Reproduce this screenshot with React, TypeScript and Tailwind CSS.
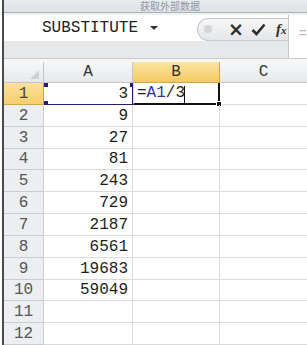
import React from 'react'

const mono = { fontFamily: '"Liberation Mono", "DejaVu Sans Mono", monospace' }

const values = ['3', '9', '27', '81', '243', '729', '2187', '6561', '19683', '59049', '', '']

function Corner({ className }: { className: string }) {
  return <div className={`absolute w-[4px] h-[4px] bg-[#1f1f7a] ${className}`} />
}

export default function App() {
  return (
    <div className="w-[307px] h-[345px] overflow-hidden bg-white pl-[2px]">
      <div className="h-full border-l-2 border-[#4a4a4a] flex flex-col">
        {/* Title bar */}
        <div className="h-[14px] bg-gradient-to-b from-[#e9ecef] to-[#dde1e6] flex items-center">
          <p
            className="pl-[136px] text-[10px] leading-[12px] text-[#8e98a4]"
            style={{ fontFamily: '"Noto Sans CJK SC", sans-serif' }}
          >
            获取外部数据
          </p>
        </div>
        <div className="h-px bg-[#a9b0b8]" />
        <div className="h-[2px] bg-[#eef0f2]" />

        {/* Name box + formula bar */}
        <div className="flex h-[48px]">
          <div className="w-[287px] flex flex-col">
            <div className="h-[26px] flex items-center bg-white">
              <div className="w-[193px] flex items-center">
                <span className="pl-[38px] text-[16px] leading-none text-[#222]" style={mono}>
                  SUBSTITUTE
                </span>
                <span className="ml-[12px] w-0 h-0 border-l-[4px] border-r-[4px] border-t-[4px] border-l-transparent border-r-transparent border-t-[#333]" />
              </div>
              <div className="flex-1 h-[23px] mt-[2px] flex items-center rounded-l-full border border-r-0 border-[#c6c9cd] bg-gradient-to-b from-[#f7f7f7] to-[#e4e6e9]">
                <span className="ml-[6px] w-[8px] h-[8px] rounded-full bg-[#d3d5d8]" />
                <span className="ml-[16px] text-[19px] leading-none font-bold text-[#2e2e2e]" style={{ fontFamily: '"DejaVu Sans", sans-serif' }}>
                  ×
                </span>
                <svg className="ml-[7px]" width="15" height="13" viewBox="0 0 15 13">
                  <path d="M1.5 7 L5.5 11 L13.5 1.5" fill="none" stroke="#2e2e2e" strokeWidth="2.6" />
                </svg>
                <span
                  className="ml-[10px] text-[15px] leading-none italic font-bold text-[#2e2e2e]"
                  style={{ fontFamily: '"Liberation Serif", serif' }}
                >
                  f<span className="text-[11px]">x</span>
                </span>
              </div>
            </div>
            <div className="flex-1 bg-[#e7e8ea]" />
          </div>
          <div className="flex-1 bg-white border-l border-[#c4c7cb] pl-[10px] pt-[5px]">
            <span className="text-[14px] text-[#bbb]" style={mono}>=</span>
          </div>
        </div>
        <div className="h-px bg-[#c8cacd]" />
        <div className="h-[4px] bg-[#f6f6f6]" />

        {/* Sheet */}
        <div className="grid grid-cols-[40px_89px_87px_87px] text-[16px] leading-none" style={mono}>
          {/* Header row */}
          <div className="h-[21px] relative bg-gradient-to-b from-[#f6f7f8] to-[#e6e8eb] border-r border-b border-[#c2c5c9]">
            <svg className="absolute right-[4px] bottom-[3px]" width="9" height="9" viewBox="0 0 9 9">
              <path d="M9 0 L9 9 L0 9 Z" fill="#cdd0d4" />
            </svg>
          </div>
          <div className="h-[21px] flex items-center justify-center bg-gradient-to-b from-[#f6f7f8] to-[#e6e8eb] border-r border-b border-[#c2c5c9] text-[#333]">
            A
          </div>
          <div className="h-[21px] flex items-center justify-center bg-gradient-to-b from-[#fbe4a2] to-[#f6c95e] border-r border-b border-[#c9a94c] text-[#333]">
            B
          </div>
          <div className="h-[21px] flex items-center justify-center bg-gradient-to-b from-[#f6f7f8] to-[#e6e8eb] border-b border-[#c2c5c9] text-[#333]">
            C
          </div>

          {values.map((v, i) => {
            const first = i === 0
            return (
              <React.Fragment key={i}>
                <div
                  className={`h-[21.84px] flex items-end justify-center pb-[2px] border-r border-b ${
                    first
                      ? 'bg-gradient-to-b from-[#fbe09a] to-[#f7cf6c] border-[#c9a94c] text-[#444]'
                      : 'bg-[#eceef1] border-[#c9ccd0] text-[#555]'
                  }`}
                >
                  {i + 1}
                </div>
                <div
                  className={`h-[21.84px] relative flex items-end justify-end pr-[4px] pb-[2px] text-[#1e1e1e] ${
                    first ? 'border-r border-b border-[#1f1f7a]' : 'border-r border-b border-[#dadada]'
                  }`}
                >
                  {v}
                  {first && (
                    <>
                      <Corner className="left-0 top-0" />
                      <Corner className="left-0 -bottom-[1px]" />
                      <Corner className="-right-[2px] top-0" />
                    </>
                  )}
                </div>
                <div
                  className={`h-[21.84px] relative flex items-end pl-[3px] pb-[2px] text-[#1e1e1e] ${
                    first ? 'border-r-2 border-b-2 border-[#111] border-l border-l-[#f2dc8a]' : 'border-r border-b border-[#dadada]'
                  }`}
                >
                  {first && (
                    <>
                      <span>
                        =<span className="text-[#34349a]">A1</span>/3
                      </span>
                      <div className="absolute left-[50px] top-[3px] w-px h-[17px] bg-[#111]" />
                      <div className="absolute -right-[4px] -bottom-[4px] w-[6px] h-[6px] bg-[#111] border border-white" />
                    </>
                  )}
                </div>
                <div className="h-[21.84px] border-b border-[#dadada]" />
              </React.Fragment>
            )
          })}
        </div>
      </div>
    </div>
  )
}
